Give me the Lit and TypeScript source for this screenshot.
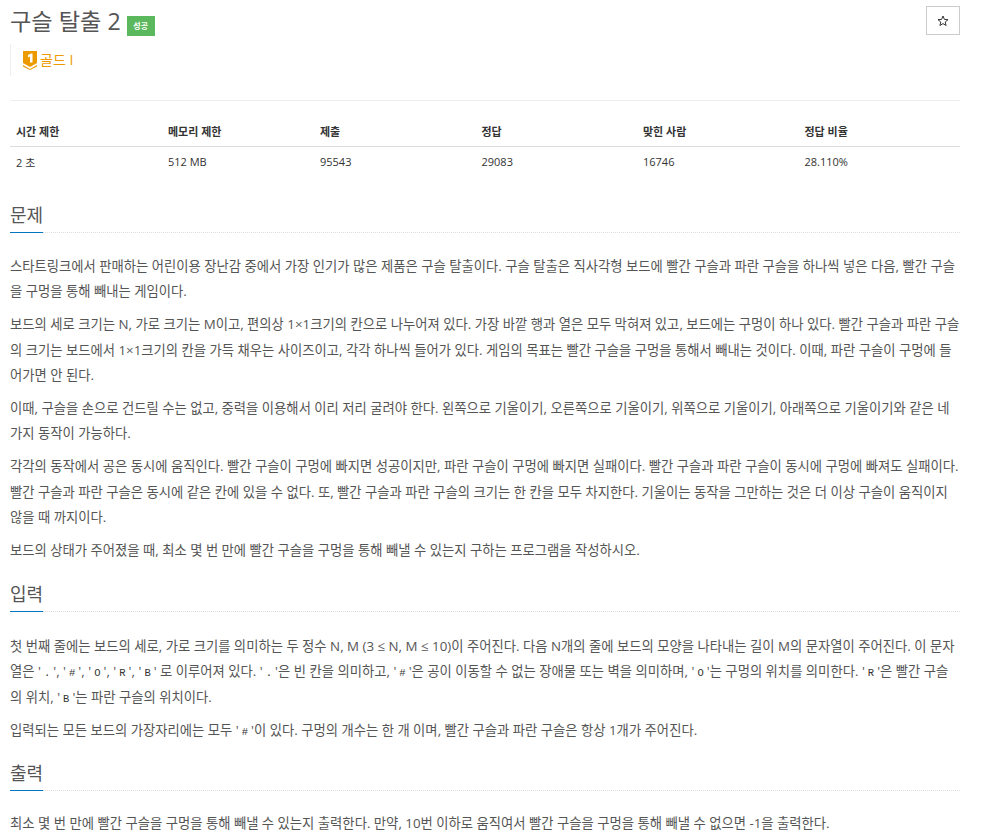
import { LitElement, html, css } from "lit";
import { customElement } from "lit/decorators.js";

const q = (s: string) => html`<span class="q">'<code>${s}</code>'</span>`;

@customElement("app-root")
export class AppRoot extends LitElement {
  static styles = css`
    :host { display: block; font-family: "Open Sans", "Noto Sans CJK KR", sans-serif; color: #333; font-size: 14px; background: #fff; height: 840px; overflow: hidden; }
    .page { padding: 0 30px 0 10px; }
    .head { display: flex; justify-content: space-between; align-items: flex-start; padding-top: 6px; height: 38px; }
    h1 { margin: 0; font-size: 23.2px; line-height: 30px; font-weight: 400; color: #555; display: flex; align-items: center; gap: 6px; }
    .badge { background: #5cb85c; color: #fff; font-size: 8px; font-weight: 700; width: 28px; height: 20px; display: flex; align-items: center; justify-content: center; margin-top: 10px; }
    .star { width: 34px; height: 29px; box-sizing: border-box; border: 1px solid #ccc; display: flex; align-items: center; justify-content: center; }
    .tier { margin-top: 0; height: 32px; border-left: 1px solid #eee; padding-left: 12px; display: flex; align-items: center; gap: 3px; color: #ec9a00; font-size: 14px; }
    .tier span { position: relative; top: -1px; }
    .rule { border: 0; border-top: 1px solid #eee; margin: 24px 0 0; }
    table { width: 100%; border-collapse: collapse; table-layout: fixed; margin-top: 15px; font-size: 11px; color: #333; }
    th { text-align: left; font-weight: 700; padding: 0 6px; height: 30px; border-bottom: 1px solid #ddd; }
    td { padding: 0 6px; height: 29px; border: 0; }
    section h2 { margin: 0; font-size: 18px; font-weight: 400; color: #555; line-height: 25px; border-bottom: 1px dotted #ddd; position: relative; height: 30px; box-sizing: border-box; }
    section h2 span { display: inline-block; height: 30px; box-sizing: border-box; border-bottom: 1px solid #0076c0; }
    section p { margin: 0 0 8px; font-size: 13.33px; line-height: 25.2px; color: #555; }
    .body { padding-top: 21px; }
    .s1 { margin-top: 27px; }
    .s2 { margin-top: 19px; }
    .s3 { margin-top: 18px; }
    .s2 .body { padding-top: 22px; }
    .s3 .body { padding-top: 20px; }
    code { font-family: "Liberation Mono", monospace; font-size: 10.5px; line-height: 0; color: #333; padding: 0 3px; }
    .q { white-space: nowrap; }
  `;

  render() {
    return html`<div class="page">
      <div class="head">
        <h1>구슬 탈출 2 <span class="badge">성공</span></h1>
        <div class="star">
          <svg width="12" height="12" viewBox="0 0 12 12"><path d="M6 1l1.400 3.400 3.600.3-2.800 2.300.9 3.500L6 8.600 2.900 10.500l.9-3.500L1 4.700l3.600-.3z" fill="none" stroke="#333" stroke-width="1"/></svg>
        </div>
      </div>
      <div class="tier">
        <svg width="14" height="19" viewBox="0 0 14 19"><path d="M0 0h14v12l-7 4-7-4z" fill="#ec9a00"/><path d="M0 14l7 4 7-4v1.500l-7 3.500-7-3.500z" fill="#ec9a00"/><path d="M5 4l3-1.500h1.500V11.500h-2.500V5.500l-2 1z" fill="#fff"/></svg>
        <span>골드 I</span>
      </div>
      <hr class="rule" />
      <table>
        <colgroup><col style="width:16%"/><col style="width:16%"/><col style="width:17%"/><col style="width:17%"/><col style="width:17%"/><col style="width:17%"/></colgroup>
        <thead><tr><th>시간 제한</th><th>메모리 제한</th><th>제출</th><th>정답</th><th>맞힌 사람</th><th>정답 비율</th></tr></thead>
        <tbody><tr><td>2 초</td><td>512 MB</td><td>95543</td><td>29083</td><td>16746</td><td>28.110%</td></tr></tbody>
      </table>
      <section class="s1">
        <h2><span>문제</span></h2>
        <div class="body">
          <p>스타트링크에서 판매하는 어린이용 장난감 중에서 가장 인기가 많은 제품은 구슬 탈출이다. 구슬 탈출은 직사각형 보드에 빨간 구슬과 파란 구슬을 하나씩 넣은 다음, 빨간 구슬을 구멍을 통해 빼내는 게임이다.</p>
          <p>보드의 세로 크기는 N, 가로 크기는 M이고, 편의상 1×1크기의 칸으로 나누어져 있다. 가장 바깥 행과 열은 모두 막혀져 있고, 보드에는 구멍이 하나 있다. 빨간 구슬과 파란 구슬의 크기는 보드에서 1×1크기의 칸을 가득 채우는 사이즈이고, 각각 하나씩 들어가 있다. 게임의 목표는 빨간 구슬을 구멍을 통해서 빼내는 것이다. 이때, 파란 구슬이 구멍에 들어가면 안 된다.</p>
          <p>이때, 구슬을 손으로 건드릴 수는 없고, 중력을 이용해서 이리 저리 굴려야 한다. 왼쪽으로 기울이기, 오른쪽으로 기울이기, 위쪽으로 기울이기, 아래쪽으로 기울이기와 같은 네 가지 동작이 가능하다.</p>
          <p>각각의 동작에서 공은 동시에 움직인다. 빨간 구슬이 구멍에 빠지면 성공이지만, 파란 구슬이 구멍에 빠지면 실패이다. 빨간 구슬과 파란 구슬이 동시에 구멍에 빠져도 실패이다. 빨간 구슬과 파란 구슬은 동시에 같은 칸에 있을 수 없다. 또, 빨간 구슬과 파란 구슬의 크기는 한 칸을 모두 차지한다. 기울이는 동작을 그만하는 것은 더 이상 구슬이 움직이지 않을 때 까지이다.</p>
          <p>보드의 상태가 주어졌을 때, 최소 몇 번 만에 빨간 구슬을 구멍을 통해 빼낼 수 있는지 구하는 프로그램을 작성하시오.</p>
        </div>
      </section>
      <section class="s2">
        <h2><span>입력</span></h2>
        <div class="body">
          <p>첫 번째 줄에는 보드의 세로, 가로 크기를 의미하는 두 정수 N, M (3 ≤ N, M ≤ 10)이 주어진다. 다음 N개의 줄에 보드의 모양을 나타내는 길이 M의 문자열이 주어진다. 이 문자열은 ${q(".")}, ${q("#")}, ${q("O")}, ${q("R")}, ${q("B")} 로 이루어져 있다. ${q(".")}은 빈 칸을 의미하고, ${q("#")}은 공이 이동할 수 없는 장애물 또는 벽을 의미하며, ${q("O")}는 구멍의 위치를 의미한다. ${q("R")}은 빨간 구슬의 위치, ${q("B")}는 파란 구슬의 위치이다.</p>
          <p>입력되는 모든 보드의 가장자리에는 모두 ${q("#")}이 있다. 구멍의 개수는 한 개 이며, 빨간 구슬과 파란 구슬은 항상 1개가 주어진다.</p>
        </div>
      </section>
      <section class="s3">
        <h2><span>출력</span></h2>
        <div class="body">
          <p>최소 몇 번 만에 빨간 구슬을 구멍을 통해 빼낼 수 있는지 출력한다. 만약, 10번 이하로 움직여서 빨간 구슬을 구멍을 통해 빼낼 수 없으면 -1을 출력한다.</p>
        </div>
      </section>
    </div>`;
  }
}
